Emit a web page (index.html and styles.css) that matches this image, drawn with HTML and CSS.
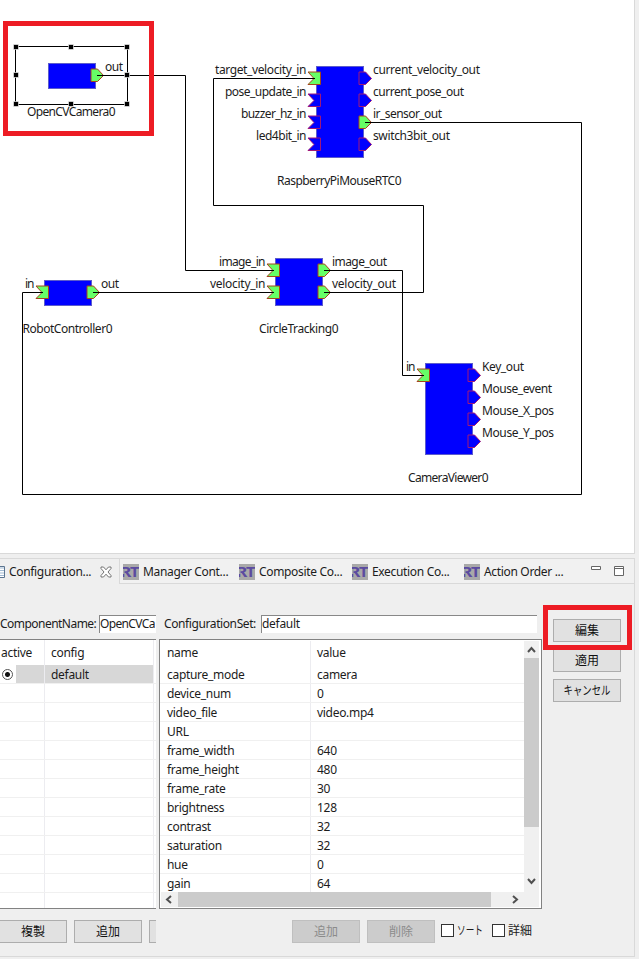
FILE: index.html
```html
<!DOCTYPE html>
<html lang="ja">
<head>
<meta charset="utf-8">
<title>RT System Editor</title>
<link rel="stylesheet" href="styles.css">
</head>
<body>
<svg class="defs" width="0" height="0">
  <defs>
    <path id="pin" d="M-6.500-6.500h12.500v12.500h-12.500l6-6z"/>
    <path id="pout" d="M-6.500-6.500h6.500l6 6.500l-6 6h-6.500z"/>
    <symbol id="rt" viewBox="0 0 16 16">
      <rect width="16" height="16" fill="#a9a9a9"/>
      <text x="-3" y="13" font-size="14" font-weight="700" textLength="11" lengthAdjust="spacingAndGlyphs" fill="#5b4ba0">R</text>
      <rect y="5" width="1.500" height="5" fill="#a9a9a9"/>
      <text x="7" y="13" font-size="14" font-weight="700" textLength="9" lengthAdjust="spacingAndGlyphs" fill="#5b4ba0">T</text>
    </symbol>
  </defs>
</svg>
<main class="app">
  <section class="editor">
    <svg class="diagram" width="634" height="553" viewBox="0 0 634 553">
      <g class="body">
        <rect x="48.500" y="63.500" width="47" height="25"/>
        <rect x="316.500" y="66.500" width="47" height="91"/>
        <rect x="44.500" y="280.500" width="47" height="25"/>
        <rect x="275.500" y="258.500" width="47" height="47"/>
        <rect x="425.500" y="363.500" width="47" height="91"/>
      </g>
      <g class="port on">
        <use href="#pout" x="97.500" y="75.500"/>
        <use href="#pin" x="314.500" y="78.500"/>
        <use href="#pout" x="365.500" y="122.500"/>
        <use href="#pin" x="42.500" y="292.500"/>
        <use href="#pout" x="93.500" y="292.500"/>
        <use href="#pin" x="273.500" y="270.500"/>
        <use href="#pin" x="273.500" y="292.500"/>
        <use href="#pout" x="324.500" y="270.500"/>
        <use href="#pout" x="324.500" y="292.500"/>
        <use href="#pin" x="423.500" y="375.500"/>
      </g>
      <g class="port">
        <use href="#pin" x="314.500" y="100.500"/>
        <use href="#pin" x="314.500" y="122.500"/>
        <use href="#pin" x="314.500" y="144.500"/>
        <use href="#pout" x="365.500" y="78.500"/>
        <use href="#pout" x="365.500" y="100.500"/>
        <use href="#pout" x="365.500" y="144.500"/>
        <use href="#pout" x="474.500" y="375.500"/>
        <use href="#pout" x="474.500" y="397.500"/>
        <use href="#pout" x="474.500" y="419.500"/>
        <use href="#pout" x="474.500" y="441.500"/>
      </g>
      <g class="wire">
        <path d="M97 75.500H185.500V270.500H274"/>
        <path d="M315 78.500H213.500V205.500H423.500V292.500H324"/>
        <path d="M365 122.500H581.500V494.500H22.500V292.500H43"/>
        <path d="M93 292.500H274"/>
        <path d="M324 270.500H402.500V375.500H424"/>
        <rect x="15.500" y="46.500" width="112" height="58"/>
      </g>
      <path class="grip" d="M13.500 44.500h5v5h-5zM68.500 44.500h5v5h-5zM124.500 44.500h5v5h-5zM13.500 72.500h5v5h-5zM124.500 72.500h5v5h-5zM13.500 101.500h5v5h-5zM68.500 101.500h5v5h-5zM124.500 101.500h5v5h-5z"/>
      <g class="label">
        <text x="105" y="71" textLength="18">out</text>
        <text x="27" y="116" textLength="88.500">OpenCVCamera0</text>
        <text x="215" y="74" textLength="91.500">target_velocity_in</text>
        <text x="225" y="96" textLength="81.500">pose_update_in</text>
        <text x="241" y="118" textLength="65.500">buzzer_hz_in</text>
        <text x="256" y="140" textLength="50.500">led4bit_in</text>
        <text x="373" y="74" textLength="107">current_velocity_out</text>
        <text x="373" y="96" textLength="91">current_pose_out</text>
        <text x="373" y="118" textLength="69">ir_sensor_out</text>
        <text x="373" y="140" textLength="77">switch3bit_out</text>
        <text x="277" y="185" textLength="124.500">RaspberryPiMouseRTC0</text>
        <text x="25" y="288" textLength="9.500">in</text>
        <text x="101" y="288" textLength="18">out</text>
        <text x="22.500" y="333" textLength="90">RobotController0</text>
        <text x="219" y="266" textLength="46.500">image_in</text>
        <text x="210" y="288" textLength="55.500">velocity_in</text>
        <text x="332" y="266" textLength="55">image_out</text>
        <text x="332" y="288" textLength="64">velocity_out</text>
        <text x="259" y="333" textLength="79.500">CircleTracking0</text>
        <text x="406" y="371" textLength="9.500">in</text>
        <text x="482" y="371" textLength="42">Key_out</text>
        <text x="482" y="393" textLength="70">Mouse_event</text>
        <text x="482" y="415" textLength="72">Mouse_X_pos</text>
        <text x="482" y="437" textLength="72">Mouse_Y_pos</text>
        <text x="408" y="482" textLength="80.500">CameraViewer0</text>
      </g>
      <rect class="mark" x="5.500" y="23.500" width="146" height="110"/>
    </svg>
  </section>

  <section class="view">
    <nav class="tabs">
      <div class="tab current">
        <svg width="5" height="14"><path d="M0 1.500H4.500V12.500H0" fill="#fff" stroke="#5c7590"/><path d="M0 3h4M0 5.500h4M0 8h4M0 10.500h4" stroke="#9fb9d3"/></svg>
        <span>Configuration...</span>
        <svg class="close" width="12" height="12" viewBox="0 0 12 12"><path d="M1 1h2.500L6 3.800 8.500 1H11v1.500L8 6l3 3.500V11H8.500L6 8.200 3.500 11H1V9.500L4 6 1 2.500z" fill="#fff" stroke="#666" stroke-width=".9"/></svg>
      </div>
      <div class="tab t2"><svg width="16" height="16"><use href="#rt"/></svg><span>Manager Cont...</span></div>
      <div class="tab t3"><svg width="16" height="16"><use href="#rt"/></svg><span>Composite Co...</span></div>
      <div class="tab t4"><svg width="16" height="16"><use href="#rt"/></svg><span>Execution Co...</span></div>
      <div class="tab t5"><svg width="16" height="16"><use href="#rt"/></svg><span>Action Order ...</span></div>
      <svg class="winctl" width="36" height="12" viewBox="0 0 36 12"><path d="M.5 1.500h9v3h-9zM23.500 1.500h9v9h-9zM23.500 3.500h9" fill="#fff" stroke="#666"/></svg>
    </nav>

    <div class="content">
      <div class="left">
        <div class="field"><label class="cname">ComponentName:</label><div class="input">OpenCVCa</div></div>
        <div class="table sets">
          <div class="row head"><span>active</span><span>config</span></div>
          <div class="row selected"><span class="radio"><i></i></span><span>default</span></div>
          <div class="row"><span></span><span></span></div><div class="row"><span></span><span></span></div>
          <div class="row"><span></span><span></span></div><div class="row"><span></span><span></span></div>
          <div class="row"><span></span><span></span></div><div class="row"><span></span><span></span></div>
          <div class="row"><span></span><span></span></div><div class="row"><span></span><span></span></div>
          <div class="row"><span></span><span></span></div><div class="row"><span></span><span></span></div>
          <div class="row"><span></span><span></span></div><div class="row"><span></span><span></span></div>
        </div>
        <div class="actions"><div class="btn">複製</div><div class="btn">追加</div><div class="btn"></div></div>
      </div>

      <div class="middle">
        <div class="field"><label class="cset">ConfigurationSet:</label><div class="input">default</div></div>
        <div class="table params">
          <div class="rows">
            <div class="row head"><span>name</span><span>value</span></div>
            <div class="row"><span>capture_mode</span><span>camera</span></div>
            <div class="row"><span>device_num</span><span>0</span></div>
            <div class="row"><span>video_file</span><span>video.mp4</span></div>
            <div class="row"><span>URL</span><span></span></div>
            <div class="row"><span>frame_width</span><span>640</span></div>
            <div class="row"><span>frame_height</span><span>480</span></div>
            <div class="row"><span>frame_rate</span><span>30</span></div>
            <div class="row"><span>brightness</span><span>128</span></div>
            <div class="row"><span>contrast</span><span>32</span></div>
            <div class="row"><span>saturation</span><span>32</span></div>
            <div class="row"><span>hue</span><span>0</span></div>
            <div class="row"><span>gain</span><span>64</span></div>
          </div>
          <div class="vbar">
            <svg width="15" height="17"><path d="M4 11l3.500-4 3.500 4"/></svg>
            <div class="thumb"></div>
            <svg width="15" height="17"><path d="M4 6l3.500 4L11 6"/></svg>
          </div>
          <div class="hbar">
            <svg width="17" height="15"><path d="M10 4L6 7.500l4 3.500"/></svg>
            <div class="thumb"></div>
            <svg width="17" height="15"><path d="M6 4l4 3.500L6 11"/></svg>
          </div>
          <div class="corner"></div>
        </div>
        <div class="actions end">
          <div class="btn off">追加</div><div class="btn off">削除</div>
          <div class="check c1"><i></i><span class="kana">ソート</span></div>
          <div class="check c2"><i></i><span>詳細</span></div>
        </div>
      </div>

      <div class="side">
        <div class="btn marked">編集</div>
        <div class="btn">適用</div>
        <div class="btn"><span class="kana cancel">キャンセル</span></div>
      </div>
    </div>
  </section>
</main>
</body>
</html>
```
FILE: styles.css
```css
*, *::after { box-sizing: border-box; }
body {
  margin: 0;
  background: #efefef;
  color: #1c1c1c;
  font: 12px/16px "Noto Sans", "Noto Sans CJK JP", sans-serif;
  overflow: hidden;
}
svg { display: block; flex: none; }
.defs { position: absolute; }
.app { width: 639px; height: 959px; display: flex; flex-direction: column; gap: 4px; }

.editor { width: 635px; height: 554px; background: #fff; border: solid #d9d9d9; border-width: 0 1px 1px 0; }
.body rect { fill: #00f; stroke: #5c5ccc; }
.port { fill: #00f; stroke: #a01878; }
.port.on { fill: #66ff66; stroke: #a5451c; }
.wire { fill: none; stroke: #000; }
.grip { fill: #000; stroke: #fff; stroke-width: .6; }
.label text { font-size: 12px; fill: #1c1c1c; }
.mark { fill: none; stroke: #ed1c24; stroke-width: 5; }

.view { width: 635px; height: 399px; border: solid #d9d9d9; border-width: 1px 1px 1px 0; }
.tabs { display: flex; height: 25px; border-bottom: 1px solid #d9d9d9; background: #f1f1f1; letter-spacing: -.33px; }
.tab { display: flex; align-items: center; gap: 4px; white-space: nowrap; flex: none; padding-top: 2px; }
.tab.current { width: 120px; height: 25px; padding-top: 1px; background: #efefef; border-right: 1px solid #d9d9d9; }
.close { margin-left: auto; margin-right: 7px; }
.t2 { width: 116px; padding-left: 3px; }
.t3 { width: 113px; padding-left: 3px; }
.t4 { width: 112px; padding-left: 3px; }
.t5 { width: 130px; padding-left: 3px; }
.winctl { margin-top: 6px; }

.content { display: flex; height: 372px; padding-top: 31px; }
.left { width: 156px; overflow: hidden; flex: none; }
.middle { width: 383px; margin-left: 3px; flex: none; }
.field { display: flex; height: 18px; margin-bottom: 6px; line-height: 18px; white-space: nowrap; }
.cname { width: 99px; letter-spacing: -.53px; }
.cset { width: 102px; padding-left: 5px; letter-spacing: -.4px; }
.input { flex: 1; background: #fff; border: solid #888; border-width: 1px 0 0 1px; line-height: 16px; overflow: hidden; letter-spacing: -.3px; }
.left .input { letter-spacing: -.65px; }
.middle .input { flex: none; width: 276px; }

.table { height: 270px; background: #fff; border: 1px solid #828282; overflow: hidden; letter-spacing: -.3px; }
.row { display: grid; height: 19px; border-bottom: 1px solid #f0f0f0; line-height: 20px; }
.row span { border-right: 1px solid #ececf0; overflow: hidden; }
.row.head { height: 25px; line-height: 26px; border: 0; }
.sets { border-width: 1px 0; width: 156px; }
.sets .row { grid-template-columns: 45px 109px; }
.sets .row span + span { padding-left: 6px; }
.sets .head span:first-child { padding-left: 1px; }
.selected { background: linear-gradient(#d7d7d7, #d7d7d7) 16px 0 / 138px 19px no-repeat; }
.radio i { display: block; width: 11px; height: 11px; margin: 4px 0 0 2px; border: 1px solid #555; border-radius: 50%; background: radial-gradient(#111 0 2px, #fff 3px); }

.params { display: grid; grid-template: 251px 16px / 364px 15px; padding-top: 1px; }
.rows { overflow: hidden; }
.params .row { grid-template-columns: 151px 213px; }
.params .row.head { height: 24px; line-height: 24px; }
.params .row span { padding-left: 7px; }
.params .row span + span { border: 0; padding-left: 6px; }
.vbar, .hbar { background: #f0f0f0; display: flex; }
.vbar { flex-direction: column; width: 15px; }
.vbar .thumb { height: 169px; margin-bottom: 46px; }
.hbar { height: 15px; margin-left: 1px; }
.hbar .thumb { width: 313px; margin-right: 16px; }
.corner { height: 15px; background: #f0f0f0; }
.thumb { background: #cbcbcb; }
.vbar path, .hbar path { fill: none; stroke: #505050; stroke-width: 2; }

.actions { display: flex; gap: 7px; margin-top: 11px; margin-left: -1px; }
.actions.end { margin-left: 133px; }
.btn { width: 68px; height: 23px; flex: none; display: flex; align-items: center; justify-content: center; background: #e1e1e1; border: 1px solid #adadad; color: #111; }
.off { background: #ccc; border-color: #bfbfbf; color: #8b8b8b; }
.check { display: flex; align-items: center; gap: 3px; height: 21px; white-space: nowrap; }
.check i { width: 13px; height: 13px; border: 1px solid #333; background: #fff; }
.c1 { width: 44px; margin-left: -1px; }
.kana { display: block; transform: scaleX(.72); transform-origin: left; width: 26px; white-space: nowrap; }
.cancel { width: 60px; transform: scaleX(.78); transform-origin: center; }

.side { margin: 4px 0 0 11px; display: flex; flex-direction: column; gap: 7px; }
.marked { position: relative; }
.marked::after { content: ""; position: absolute; left: -11px; top: -15px; width: 89px; height: 45px; border: 5px solid #ed1c24; }
```
